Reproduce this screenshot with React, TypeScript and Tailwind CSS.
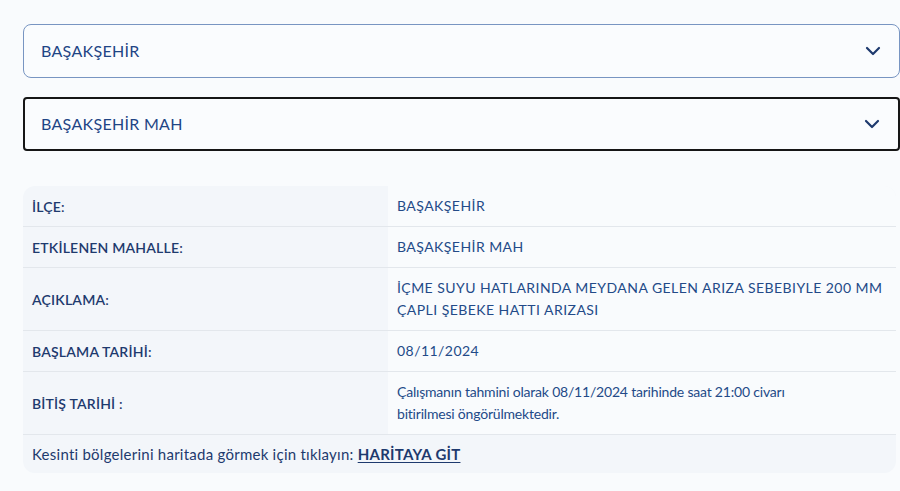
import React from "react";

const Chevron = () => (
  <svg width="16" height="10" viewBox="0 0 16 10" fill="none">
    <path d="M2 2l6 6 6-6" stroke="#1e3a6e" strokeWidth="2.2" strokeLinecap="round" strokeLinejoin="round" />
  </svg>
);

const rows: { label: string; value: React.ReactNode; tall?: boolean; caps?: boolean }[] = [
  { label: "İLÇE:", value: "BAŞAKŞEHİR", caps: true },
  { label: "ETKİLENEN MAHALLE:", value: "BAŞAKŞEHİR MAH", caps: true },
  {
    label: "AÇIKLAMA:",
    tall: true,
    caps: true,
    value: (
      <>
        İÇME SUYU HATLARINDA MEYDANA GELEN ARIZA SEBEBIYLE 200 MM
        <br />
        ÇAPLI ŞEBEKE HATTI ARIZASI
      </>
    ),
  },
  { label: "BAŞLAMA TARİHİ:", value: "08/11/2024", caps: true },
  {
    label: "BİTİŞ TARİHİ :",
    tall: true,
    value: (
      <>
        Çalışmanın tahmini olarak 08/11/2024 tarihinde saat 21:00 civarı
        <br />
        bitirilmesi öngörülmektedir.
      </>
    ),
  },
];

export default function App() {
  return (
    <div
      className="w-[900px] h-[491px] bg-[#f9fbfd] pt-[24px] pl-[23px] overflow-hidden text-[#1e3a6e]"
      style={{ fontFamily: "Lato, 'Noto Sans', sans-serif" }}
    >
      <div className="flex flex-col gap-[19px] w-[877px]">
        <div className="h-[54px] rounded-[8px] border border-[#7895c2] bg-[#fafcfe] flex items-center justify-between pl-[17px] pr-[18px]">
          <span className="text-[16px] tracking-[0.3px] text-[#1f4585]">BAŞAKŞEHİR</span>
          <Chevron />
        </div>
        <div className="h-[54px] rounded-[4px] border-2 border-[#161616] bg-[#fafcfe] flex items-center justify-between pl-[16px] pr-[18px]">
          <span className="text-[16px] tracking-[0.3px] text-[#1f4585]">BAŞAKŞEHİR MAH</span>
          <Chevron />
        </div>
      </div>

      <div className="mt-[35px] w-[873px] rounded-[12px] overflow-hidden bg-[#f3f6fa]">
        {rows.map((r, i) => (
          <div
            key={i}
            className={`grid grid-cols-[365px_1fr] ${i > 0 ? "border-t border-[#e3e7ec]" : ""}`}
          >
            <div
              className={`flex items-center pl-[9px] font-semibold text-[14px] tracking-[0.2px] ${
                r.tall ? "h-[62px]" : "h-[40px]"
              }`}
            >
              {r.label}
            </div>
            <div
              className={`flex items-center bg-[#f9fbfd] pl-[9px] text-[#234a88] leading-[22px] ${
                r.caps ? "text-[14px] tracking-[0.45px]" : "text-[14px] tracking-[-0.2px]"
              }`}
            >
              <div>{r.value}</div>
            </div>
          </div>
        ))}
        <div className="border-t border-[#e3e7ec] h-[39px] flex items-center pl-[9px] text-[15px] tracking-[0.25px]">
          Kesinti bölgelerini haritada görmek için tıklayın:&nbsp;
          <a className="font-bold underline underline-offset-2">HARİTAYA GİT</a>
        </div>
      </div>
    </div>
  );
}
